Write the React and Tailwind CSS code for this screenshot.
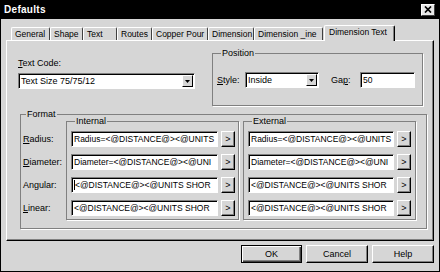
import React from "react";

const RAISED =
  "bg-[#d6d6d6] border border-t-white border-l-white border-r-black border-b-black shadow-[inset_-1px_-1px_0_#808080]";
const SUNKEN =
  "bg-white border border-t-[#808080] border-l-[#808080] border-r-white border-b-white shadow-[inset_1px_1px_0_#000]";
const GROUP = "border border-[#808080] shadow-[1px_1px_0_#fff]";

function Arrow() {
  return (
    <div className="w-[11px] h-[12px] mr-[1px] shrink-0 bg-[#d6d6d6] border border-t-white border-l-white border-r-black border-b-black flex items-center justify-center">
      <svg width="5" height="3" viewBox="0 0 5 3">
        <path d="M0 0 H5 L2.5 3 Z" fill="black" />
      </svg>
    </div>
  );
}

function Field({ w, children, caret }) {
  return (
    <div className={`${w} h-[16px] ${SUNKEN} flex items-center overflow-hidden whitespace-nowrap pl-[2px] text-[8.5px]`}>
      {caret && <span className="inline-block w-[1px] h-[10px] bg-black shrink-0" />}
      <span>{children}</span>
    </div>
  );
}

function Row({ w, text, caret }) {
  return (
    <div className="flex items-center h-[16px]">
      <Field w={w} caret={caret}>{text}</Field>
      <div className={`ml-[3px] w-[14px] h-[16px] ${RAISED} flex items-center justify-center`}>
        <span className="leading-[9px]">&gt;</span>
      </div>
    </div>
  );
}

const tabs = [
  { t: "General", w: "w-[39px]" },
  { t: "Shape", w: "w-[33px]" },
  { t: "Text", w: "w-[34px]" },
  { t: "Routes", w: "w-[35px]" },
  { t: "Copper Pour", w: "w-[56px]" },
  { t: "Dimension", w: "w-[46px]" },
  { t: "Dimension _ine", w: "w-[69px]" },
];

export default function App() {
  return (
    <div className="w-[440px] h-[272px] bg-[#d6d6d6] border-l border-r border-b border-black flex flex-col font-['Liberation_Sans',Arial,sans-serif] text-[9px] leading-[11px] text-black overflow-hidden">
      {/* Title bar */}
      <div className="h-[19px] shrink-0 bg-black flex items-center justify-between pl-[3px] pr-[4px]">
        <span className="text-white font-bold text-[10px] tracking-[0.3px]">Defaults</span>
        <div className="w-[14px] h-[12px] bg-[#e8e8e8] border border-t-white border-l-white border-r-[#404040] border-b-[#404040] flex items-center justify-center">
          <svg width="8" height="7" viewBox="0 0 8 7">
            <path d="M1 0.5 L7 6.5 M7 0.5 L1 6.5" stroke="black" strokeWidth="1.7" />
          </svg>
        </div>
      </div>

      {/* Tabs */}
      <div className="flex items-end h-[15px] mt-[6px] ml-[10px] shrink-0 text-[8.5px]">
        {tabs.map((tb) => (
          <div
            key={tb.t}
            className={`${tb.w} h-[13px] border-t border-l border-r border-t-white border-l-white border-r-[#404040] rounded-t-[2px] pl-[3px] leading-[12px] whitespace-nowrap overflow-hidden`}
          >
            {tb.t}
          </div>
        ))}
        <div className="w-[71px] ml-[1px] h-[16px] -mb-[1px] relative z-10 bg-[#d6d6d6] border-t border-l border-r border-t-white border-l-white border-r-black shadow-[inset_-1px_0_0_#808080] rounded-t-[2px] pl-[4px] leading-[13px] whitespace-nowrap">
          Dimension Text
        </div>
      </div>

      {/* Panel */}
      <div className="mx-[5px] h-[201px] shrink-0 border border-t-white border-l-white border-r-black border-b-black shadow-[inset_-1px_-1px_0_#808080] flex flex-col">
        {/* Top section */}
        <div className="flex items-start pt-[8px] pl-[11px]">
          <div className="flex flex-col w-[177px]">
            <div className="mt-[9px] leading-[11px]">
              <span className="underline">T</span>ext Code:
            </div>
            <div className={`mt-[4px] w-[177px] h-[16px] ${SUNKEN} flex items-center`}>
              <span className="flex-1 pl-[2px] whitespace-nowrap">Text Size 75/75/12</span>
              <Arrow />
            </div>
          </div>

          <fieldset className={`ml-[17px] w-[211px] h-[57px] ${GROUP} pl-[4px]`}>
            <legend className="ml-[4px] px-[1px] leading-[9px]">Position</legend>
            <div className="flex items-center mt-[14px] h-[16px]">
              <span className="w-[28px]">
                <span className="underline">S</span>tyle:
              </span>
              <div className={`w-[74px] h-[16px] ${SUNKEN} flex items-center`}>
                <span className="flex-1 pl-[2px]">Inside</span>
                <Arrow />
              </div>
              <span className="ml-[12px] w-[29px]">
                Ga<span className="underline">p</span>:
              </span>
              <Field w="w-[55px]">50</Field>
            </div>
          </fieldset>
        </div>

        {/* Format */}
        <fieldset className={`mt-[4px] ml-[13px] w-[407px] ${GROUP} pl-[2px] pb-[8px]`}>
          <legend className="ml-[3px] px-[1px] leading-[9px]">Format</legend>
          <div className="flex items-start -mt-[2px]">
            <div className="w-[43px] flex flex-col gap-[7px] pt-[14px]">
              <div className="h-[16px] flex items-center">
                <span className="underline">R</span>adius:
              </div>
              <div className="h-[16px] flex items-center">
                <span className="underline">D</span>iameter:
              </div>
              <div className="h-[16px] flex items-center">Angular:</div>
              <div className="h-[16px] flex items-center">
                <span className="underline">L</span>inear:
              </div>
            </div>

            <fieldset className={`w-[173px] h-[103px] ${GROUP} pl-[4px]`}>
              <legend className="ml-[4px] px-[1px] leading-[9px]">Internal</legend>
              <div className="flex flex-col gap-[7px] pt-[5px]">
                <Row w="w-[147px]" text="Radius=<@DISTANCE@><@UNITS" />
                <Row w="w-[147px]" text="Diameter=<@DISTANCE@><@UNI" />
                <Row w="w-[147px]" text="<@DISTANCE@><@UNITS SHOR" caret />
                <Row w="w-[147px]" text="<@DISTANCE@><@UNITS SHOR" />
              </div>
            </fieldset>

            <fieldset className={`ml-[4px] w-[173px] h-[103px] ${GROUP} pl-[4px]`}>
              <legend className="ml-[4px] px-[1px] leading-[9px]">External</legend>
              <div className="flex flex-col gap-[7px] pt-[5px]">
                <Row w="w-[146px]" text="Radius=<@DISTANCE@><@UNITS" />
                <Row w="w-[146px]" text="Diameter=<@DISTANCE@><@UNI" />
                <Row w="w-[146px]" text="<@DISTANCE@><@UNITS SHOR" />
                <Row w="w-[146px]" text="<@DISTANCE@><@UNITS SHOR" />
              </div>
            </fieldset>
          </div>
        </fieldset>
      </div>

      {/* Buttons */}
      <div className="flex justify-end gap-[4px] pr-[5px] mt-[4px] shrink-0">
        <div className="w-[61px] h-[18px] bg-[#d6d6d6] border border-black shadow-[inset_1px_1px_0_#fff,inset_-1px_-1px_0_#404040,inset_-2px_-2px_0_#808080] flex items-center justify-center">
          OK
        </div>
        <div className={`w-[62px] h-[18px] ${RAISED} flex items-center justify-center`}>Cancel</div>
        <div className={`w-[62px] h-[18px] ${RAISED} flex items-center justify-center`}>Help</div>
      </div>
    </div>
  );
}
